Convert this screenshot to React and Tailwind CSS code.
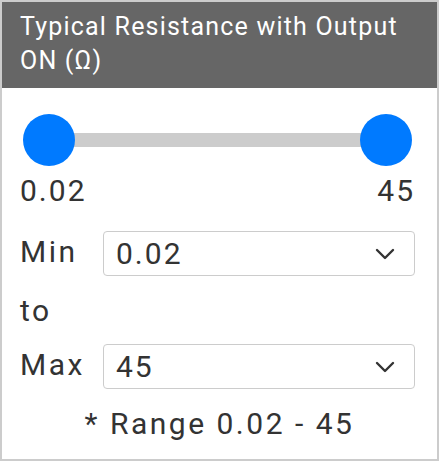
import { useState } from "react";

const font = { fontFamily: "Roboto, 'Liberation Sans', sans-serif" };

function Chevron() {
  return (
    <svg width="20" height="12" viewBox="0 0 20 12" fill="none">
      <path
        d="M2 2l8 8 8-8"
        stroke="#333"
        strokeWidth="2.4"
        strokeLinecap="round"
        strokeLinejoin="round"
      />
    </svg>
  );
}

function SelectBox({ value }) {
  return (
    <div className="flex h-[45px] flex-1 items-center justify-between rounded-[4px] border border-[#cccccc] bg-white pl-[12px] pr-[19px]">
      <span className="text-[30px] leading-[34px] tracking-[2px] text-[#333]">
        {value}
      </span>
      <Chevron />
    </div>
  );
}

export default function App() {
  const [min] = useState("0.02");
  const [max] = useState("45");

  return (
    <div className="w-[440px] h-[461px] bg-white" style={font}>
      <div className="flex h-[461px] w-[439px] flex-col border-2 border-[#cccccc]">
        {/* header */}
        <div className="bg-[#666666] pl-[18px] pr-[16px] pt-[8px] pb-[10px] text-[25px] leading-[34px] tracking-[1.2px] text-white">
          Typical Resistance with Output ON (Ω)
        </div>

        <div className="flex flex-col pl-[18px] pr-[22px]">
          {/* slider */}
          <div className="relative mt-[26px] h-[52px]">
            <div className="absolute left-[29px] right-[28px] top-[19px] h-[14px] bg-[#cccccc]" />
            <div className="absolute left-[3px] top-0 h-[52px] w-[52px] rounded-full bg-[#007aff]" />
            <div className="absolute right-[3px] top-0 h-[52px] w-[52px] rounded-full bg-[#007aff]" />
          </div>

          <div className="mt-[8px] flex justify-between pr-[2px] text-[30px] leading-[34px] tracking-[2px] text-[#333]">
            <span>{min}</span>
            <span className="-mr-[2px]">{max}</span>
          </div>

          {/* min */}
          <div className="mt-[23px] flex items-center">
            <span className="w-[83px] -mt-[4px] text-[30px] leading-[34px] tracking-[2.5px] text-[#333]">
              Min
            </span>
            <SelectBox value={min} />
          </div>

          <div className="mt-[18px] text-[30px] leading-[34px] tracking-[2.5px] text-[#333]">
            to
          </div>

          {/* max */}
          <div className="mt-[16px] flex items-center">
            <span className="w-[83px] -mt-[4px] text-[30px] leading-[34px] tracking-[2.5px] text-[#333]">
              Max
            </span>
            <SelectBox value={max} />
          </div>
        </div>

        <div className="mt-[18px] text-center text-[30px] leading-[34px] tracking-[2.5px] text-[#333]">
          * Range 0.02 - 45
        </div>
      </div>
    </div>
  );
}
